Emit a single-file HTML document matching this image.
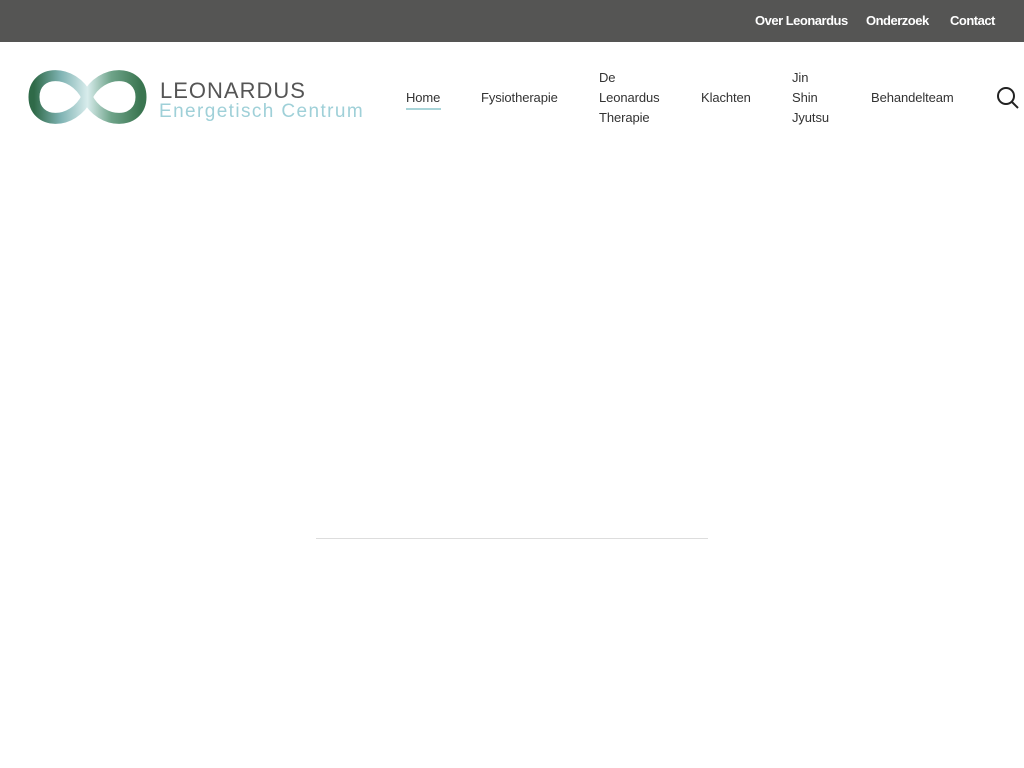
<!DOCTYPE html>
<html><head><meta charset="utf-8"><style>
*{margin:0;padding:0;box-sizing:border-box}
body{width:1024px;height:768px;background:#fff;font-family:"Liberation Sans",sans-serif;position:relative;overflow:hidden}
.top{position:absolute;left:0;top:0;width:1024px;height:42px;background:#555554}
.top span{position:absolute;top:13px;color:#fff;font-weight:bold;font-size:13px;letter-spacing:-0.5px}
.nav span{position:absolute;color:#333;font-size:13px;letter-spacing:-0.1px;line-height:20px}
.line{position:absolute;left:316px;top:538px;width:392px;height:1px;background:#ddd}
</style></head><body>
<div class="top">
<span style="left:755px">Over Leonardus</span>
<span style="left:866px">Onderzoek</span>
<span style="left:950px">Contact</span>
</div>
<svg style="position:absolute;left:27px;top:68px" width="122" height="60" viewBox="0 0 122 60">
<defs><linearGradient id="g1" x1="0" x2="1" y1="0" y2="0"><stop offset="0" stop-color="#2f6a48"/><stop offset=".25" stop-color="#7fb3b3"/><stop offset=".5" stop-color="#d8ecec"/><stop offset=".72" stop-color="#6fa48a"/><stop offset="1" stop-color="#3a7550"/></linearGradient></defs>
<path d="M60 29 C74 0,114 1,114 29 C114 57,74 58,60 29 C46 0,7 1,7 29 C7 57,46 58,60 29Z" fill="none" stroke="url(#g1)" stroke-width="11"/>
</svg>
<div style="position:absolute;left:160px;top:78px;font-size:22px;color:#555;letter-spacing:1px">LEONARDUS</div>
<div style="position:absolute;left:159px;top:101px;font-size:19px;color:#9fd0d8;letter-spacing:1.4px">Energetisch Centrum</div>
<div class="nav">
<span style="left:406px;top:88px">Home</span>
<div style="position:absolute;left:406px;top:108px;width:35px;height:2px;background:#a8d4d8"></div>
<span style="left:481px;top:88px">Fysiotherapie</span>
<span style="left:599px;top:68px">De<br>Leonardus<br>Therapie</span>
<span style="left:701px;top:88px">Klachten</span>
<span style="left:792px;top:68px">Jin<br>Shin<br>Jyutsu</span>
<span style="left:871px;top:88px">Behandelteam</span>
</div>
<svg style="position:absolute;left:996px;top:86px" width="24" height="24" viewBox="0 0 24 24"><circle cx="10" cy="10" r="8" fill="none" stroke="#222" stroke-width="2"/><path d="M16 16l6 6" stroke="#222" stroke-width="2"/></svg>
<div class="line"></div>
</body></html>
